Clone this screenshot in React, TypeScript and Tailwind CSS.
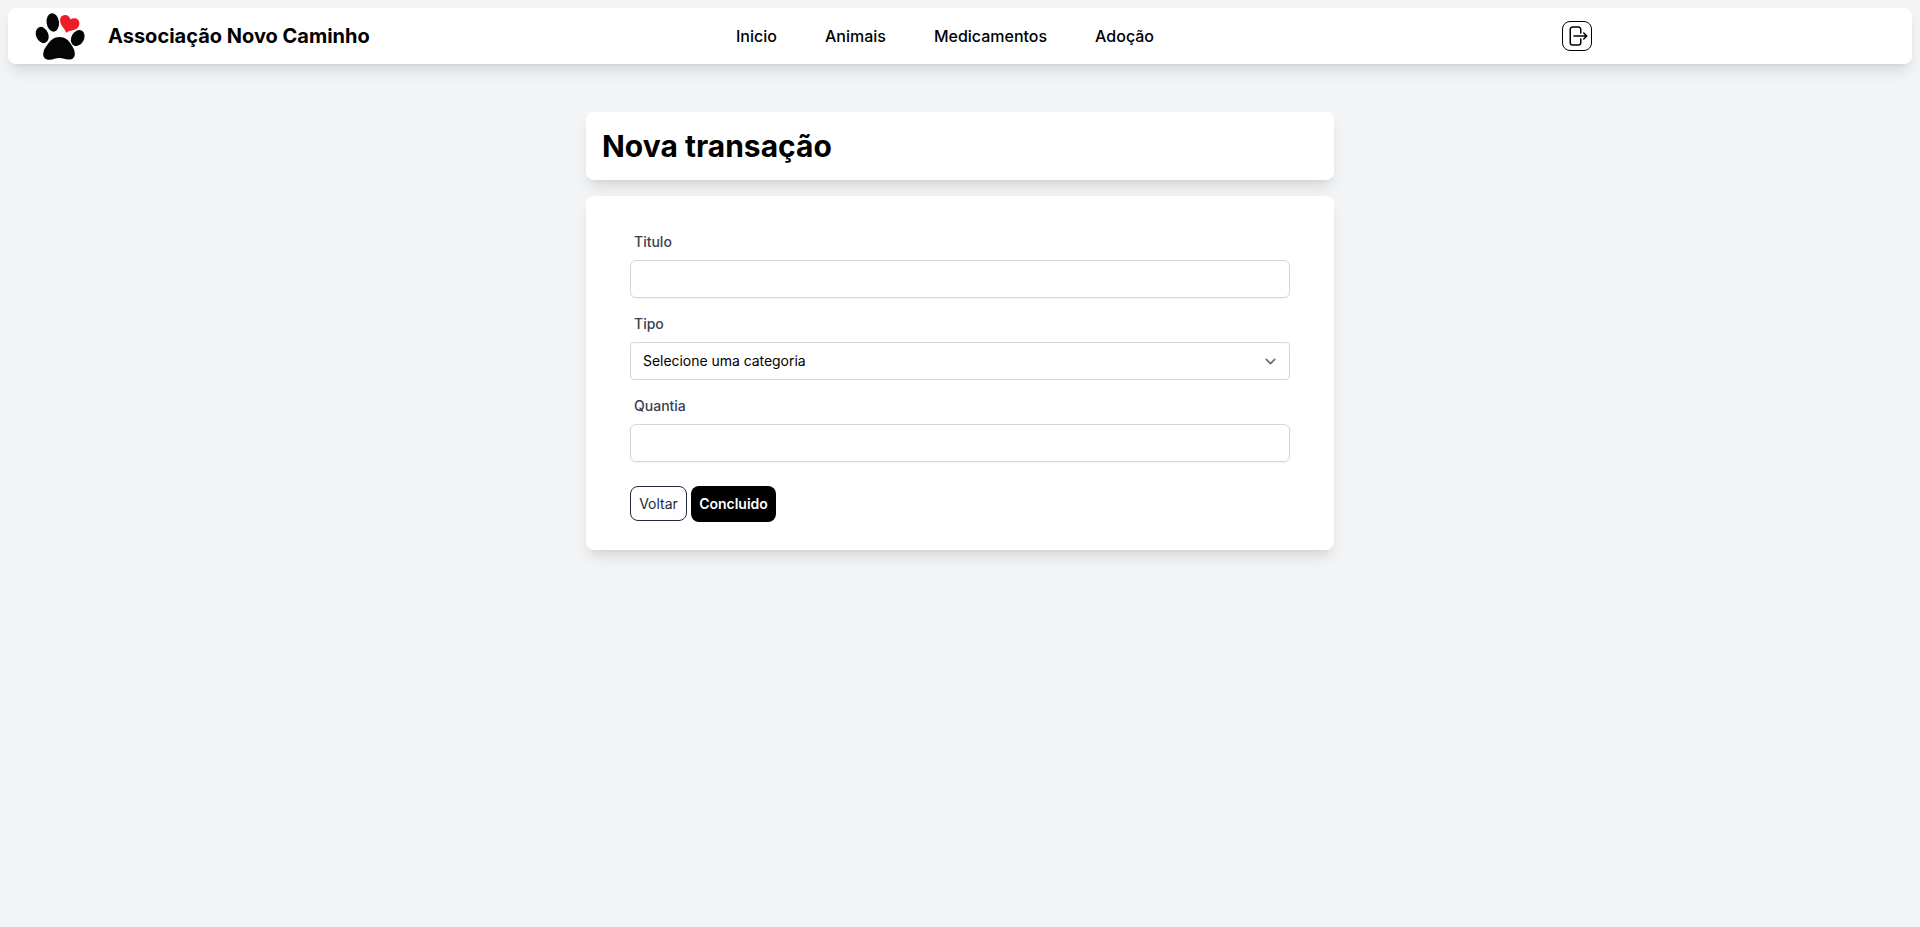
import React from "react";

const navItems = ["Inicio", "Animais", "Medicamentos", "Adoção"];

function Logo() {
  return (
    <svg viewBox="0 0 50 48" className="h-12 w-[50px]" aria-hidden="true">
      <ellipse cx="17.8" cy="10.4" rx="6.2" ry="9.3" transform="rotate(-8 17.8 10.4)" fill="#050505" />
      <ellipse cx="7.2" cy="23" rx="6.1" ry="8.4" transform="rotate(-22 7.2 23)" fill="#050505" />
      <ellipse cx="42.7" cy="26" rx="6.3" ry="8.4" transform="rotate(28 42.7 26)" fill="#050505" />
      <path
        d="M24.5 25C30 25 33.800 28.200 36.500 33C38.500 36.400 40 38.600 39.800 42.200C39.600 46 37 47.800 33.500 47.600C30 47.400 28 46 24.500 46C20.500 46 18.500 47.600 14.500 47.700C10.500 47.800 8.200 45.600 8.200 42.200C8.200 38.600 10 36 12.200 33C15.500 28.200 19 25 24.500 25Z"
        fill="#050505"
      />
      <path
        d="M31.200 20.800C30.200 17 25.400 13.600 25.100 9C24.700 5 27.200 3 30 2.900C32.800 2.900 34.800 4.800 35.400 7.400C37.600 6 41 5.800 43 7.800C45.200 10.200 44.700 14.300 42 16.400C38.800 18.900 34.500 17.700 31.200 20.800Z"
        fill="#ee1c25"
      />
    </svg>
  );
}

function LogoutIcon() {
  return (
    <svg viewBox="0 0 24 24" className="size-6" fill="none" stroke="currentColor" strokeWidth="1.5" strokeLinecap="round" strokeLinejoin="round">
      <path d="M15.75 9V5.25A2.25 2.25 0 0 0 13.5 3h-6a2.25 2.25 0 0 0-2.25 2.25v13.5A2.25 2.25 0 0 0 7.5 21h6a2.25 2.25 0 0 0 2.25-2.25V15m3 0 3-3m0 0-3-3m3 3H9" />
    </svg>
  );
}

function Header() {
  return (
    <header className="flex h-14 items-center rounded-lg bg-white shadow-lg">
      <div className="flex w-[728px] items-center pl-[27px]">
        <Logo />
        <span className="ml-[23px] text-xl font-bold">Associação Novo Caminho</span>
      </div>
      <nav className="flex w-[826px] gap-12 font-medium">
        {navItems.map((item) => (
          <a key={item} href="#">{item}</a>
        ))}
      </nav>
      <button aria-label="Sair" className="rounded-lg border border-black p-0.5">
        <LogoutIcon />
      </button>
    </header>
  );
}

function Field({ id, label, children }: { id: string; label: string; children: React.ReactNode }) {
  return (
    <div>
      <label htmlFor={id} className="mb-2 ml-1 block text-sm font-medium text-gray-700">{label}</label>
      {children}
    </div>
  );
}

export default function App() {
  return (
    <div className="min-h-screen bg-[#f3f4f6] p-2 font-['Inter',sans-serif] text-black">
      <Header />
      <main className="mx-auto mt-12 flex w-[748px] flex-col gap-4">
        <section className="rounded-lg bg-white p-4 shadow-lg">
          <h1 className="text-3xl font-bold">Nova transação</h1>
        </section>
        <form className="h-[354px] rounded-lg bg-white px-11 pt-9 shadow-lg">
          <div className="flex flex-col gap-4">
            <Field id="titulo" label="Titulo">
              <input id="titulo" className="block h-[38px] w-full rounded-md border border-gray-300 px-3 text-sm shadow-xs" />
            </Field>
            <Field id="tipo" label="Tipo">
              <div className="grid">
                <select id="tipo" className="col-start-1 row-start-1 h-[38px] w-full appearance-none rounded border border-gray-300 bg-white px-3 text-sm tracking-[-0.04px]">
                  <option>Selecione uma categoria</option>
                </select>
                <svg viewBox="0 0 20 20" className="pointer-events-none col-start-1 row-start-1 mr-[9px] size-[21px] self-center justify-self-end" fill="none" stroke="#6b7280" strokeWidth="1.7" strokeLinecap="round" strokeLinejoin="round">
                  <path d="m6 8 4 4 4-4" />
                </svg>
              </div>
            </Field>
            <Field id="quantia" label="Quantia">
              <input id="quantia" className="block h-[38px] w-full rounded-md border border-gray-300 px-3 text-sm shadow-xs" />
            </Field>
          </div>
          <div className="mt-6 flex items-start gap-1 text-sm">
            <button type="button" className="h-[35px] w-[57px] rounded-lg border border-gray-800 text-gray-800">Voltar</button>
            <button type="button" className="h-9 w-[85px] rounded-lg bg-black font-semibold text-white">Concluido</button>
          </div>
        </form>
      </main>
    </div>
  );
}
